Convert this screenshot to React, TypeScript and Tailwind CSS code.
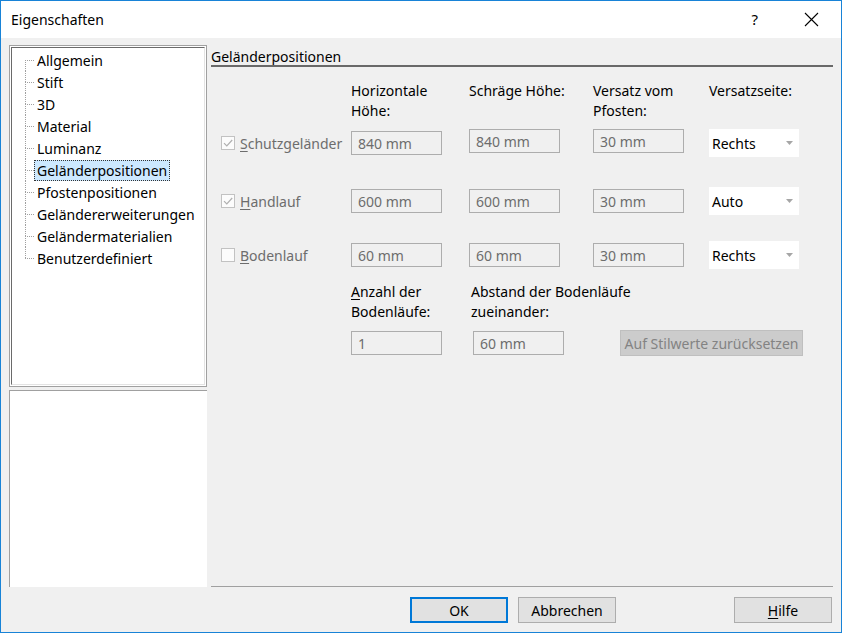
import React from "react";

const treeItems = [
  "Allgemein",
  "Stift",
  "3D",
  "Material",
  "Luminanz",
  "Geländerpositionen",
  "Pfostenpositionen",
  "Geländererweiterungen",
  "Geländermaterialien",
  "Benutzerdefiniert",
];

const rows = [
  { key: "S", rest: "chutzgeländer", checked: true, h: "840 mm", s: "840 mm", v: "30 mm", side: "Rechts" },
  { key: "H", rest: "andlauf", checked: true, h: "600 mm", s: "600 mm", v: "30 mm", side: "Auto" },
  { key: "B", rest: "odenlauf", checked: false, h: "60 mm", s: "60 mm", v: "30 mm", side: "Rechts" },
];

function CheckBox({ checked }: { checked: boolean }) {
  return (
    <div className="w-[14px] h-[14px] border border-[#c2c2c2] bg-[#fcfcfc] flex items-center justify-center">
      {checked && (
        <svg width="12" height="12" viewBox="0 0 12 12">
          <path d="M2 6.2 L4.8 9 L10.2 3" fill="none" stroke="#b0b0b0" strokeWidth="1.2" />
        </svg>
      )}
    </div>
  );
}

function Field({ value, className = "" }: { value: string; className?: string }) {
  return (
    <div
      className={`w-[91px] h-[24px] border border-[#adadad] bg-[#f0f0f0] pl-[6px] flex items-center text-[#6d6d6d] ${className}`}
    >
      {value}
    </div>
  );
}

function Dropdown({ value }: { value: string }) {
  return (
    <div className="w-[90px] h-[28px] bg-white flex items-center pl-[3px] pr-[6px] text-black">
      <span className="flex-1">{value}</span>
      <svg width="7" height="4" viewBox="0 0 7 4">
        <path d="M0 0 L7 0 L3.5 4 Z" fill="#a6a6a6" />
      </svg>
    </div>
  );
}

export default function App() {
  return (
    <div
      className="w-[842px] h-[633px] border border-[#1883d7] bg-[#f0f0f0] flex flex-col text-[14px] text-black overflow-hidden"
      style={{ fontFamily: '"Noto Sans", "Open Sans", sans-serif' }}
    >
      {/* Titelleiste */}
      <div className="h-[37px] bg-white flex items-center pl-[10px] shrink-0">
        <span className="flex-1 text-[14px]">Eigenschaften</span>
        <span className="text-[15px] mr-[46px]">?</span>
        <svg width="15" height="15" viewBox="0 0 15 15" className="mr-[22px]">
          <path d="M1 1 L14 14 M14 1 L1 14" stroke="#000" strokeWidth="1.1" />
        </svg>
      </div>

      {/* Hauptbereich */}
      <div className="flex pt-[7px] pl-[8px]">
        {/* linke Spalte */}
        <div className="w-[198px] flex flex-col gap-[3px]">
          <div className="h-[342px] border border-[#a0a0a0] bg-white p-[1px]">
            <div className="h-full border-l border-t border-[#6a6a6a] border-r-[#e3e3e3] border-b-[#e3e3e3] border-r border-b pl-[13px] pt-[1px]">
              {treeItems.map((item, i) => (
                <div key={item} className="h-[22px] flex">
                  <div className="w-[9px] flex flex-col">
                    <div
                      className={`h-[11px] border-dotted border-[#a0a0a0] ${i > 0 ? "border-l" : ""}`}
                    />
                    <div
                      className={`flex-1 border-t border-dotted border-[#a0a0a0] ${
                        i < treeItems.length - 1 ? "border-l" : ""
                      }`}
                    />
                  </div>
                  <div className="flex items-center">
                    <span
                      className={`h-[21px] flex items-center px-[2px] border border-dotted ${
                        item === "Geländerpositionen"
                          ? "bg-[#cce8ff] border-[#333]"
                          : "border-transparent"
                      }`}
                    >
                      {item}
                    </span>
                  </div>
                </div>
              ))}
            </div>
          </div>
          <div className="h-[197px] bg-white border-l border-t border-[#a0a0a0]" />
        </div>

        {/* rechte Spalte */}
        <div className="ml-[4px] w-[622px] h-[542px] flex flex-col">
          <div className="h-[20px] leading-[24px]">Geländerpositionen</div>
          <div className="h-[2px] bg-[#696969]" />

          {/* Spaltenköpfe */}
          <div className="flex mt-[14px] leading-[20px]">
            <div className="w-[140px]" />
            <div className="w-[118px]">
              Horizontale
              <br />
              Höhe:
            </div>
            <div className="w-[124px]">Schräge Höhe:</div>
            <div className="w-[116px]">
              Versatz vom
              <br />
              Pfosten:
            </div>
            <div className="w-[90px]">Versatzseite:</div>
          </div>

          {/* Zeilen */}
          {rows.map((r, i) => (
            <div
              key={r.key}
              className={`flex items-center h-[30px] ${
                i === 0 ? "mt-[7px]" : i === 1 ? "mt-[28px]" : "mt-[24px]"
              }`}
            >
              <div className="w-[140px] pl-[10px] flex items-center gap-[5px] text-[#6d6d6d]">
                <CheckBox checked={r.checked} />
                <span>
                  <span className="underline underline-offset-2">{r.key}</span>
                  {r.rest}
                </span>
              </div>
              <div className="w-[118px]">
                <Field value={r.h} />
              </div>
              <div className="w-[124px]">
                <Field value={r.s} className={i === 0 ? "mb-[4px]" : ""} />
              </div>
              <div className="w-[116px]">
                <Field value={r.v} className={i === 0 ? "mb-[4px]" : ""} />
              </div>
              <Dropdown value={r.side} />
            </div>
          ))}

          {/* Bodenläufe */}
          <div className="flex mt-[12px] leading-[20px]">
            <div className="w-[140px]" />
            <div className="w-[120px]">
              <span className="underline underline-offset-2">A</span>nzahl der
              <br />
              Bodenläufe:
            </div>
            <div>
              Abstand der Bodenläufe
              <br />
              zueinander:
            </div>
          </div>
          <div className="flex items-center h-[26px] mt-[8px]">
            <div className="w-[140px]" />
            <Field value="1" />
            <div className="w-[31px]" />
            <Field value="60 mm" />
            <div className="w-[56px]" />
            <div className="w-[183px] h-[26px] bg-[#cccccc] border border-[#bfbfbf] flex items-center justify-center text-[#838383]">
              Auf Stilwerte zurücksetzen
            </div>
          </div>

          <div className="flex-1" />
          <div className="h-[1px] bg-[#a0a0a0]" />
        </div>
      </div>

      {/* Schaltflächen */}
      <div className="flex h-[26px] mt-[10px] pl-[409px] pr-[9px]">
        <button className="w-[98px] h-[26px] border-2 border-[#0078d7] bg-[#e1e1e1] flex items-center justify-center">
          OK
        </button>
        <button className="ml-[10px] w-[98px] h-[26px] border border-[#adadad] bg-[#e1e1e1] flex items-center justify-center">
          Abbrechen
        </button>
        <button className="ml-auto w-[98px] h-[26px] border border-[#adadad] bg-[#e1e1e1] flex items-center justify-center">
          <span className="underline underline-offset-2">H</span>ilfe
        </button>
      </div>
    </div>
  );
}
